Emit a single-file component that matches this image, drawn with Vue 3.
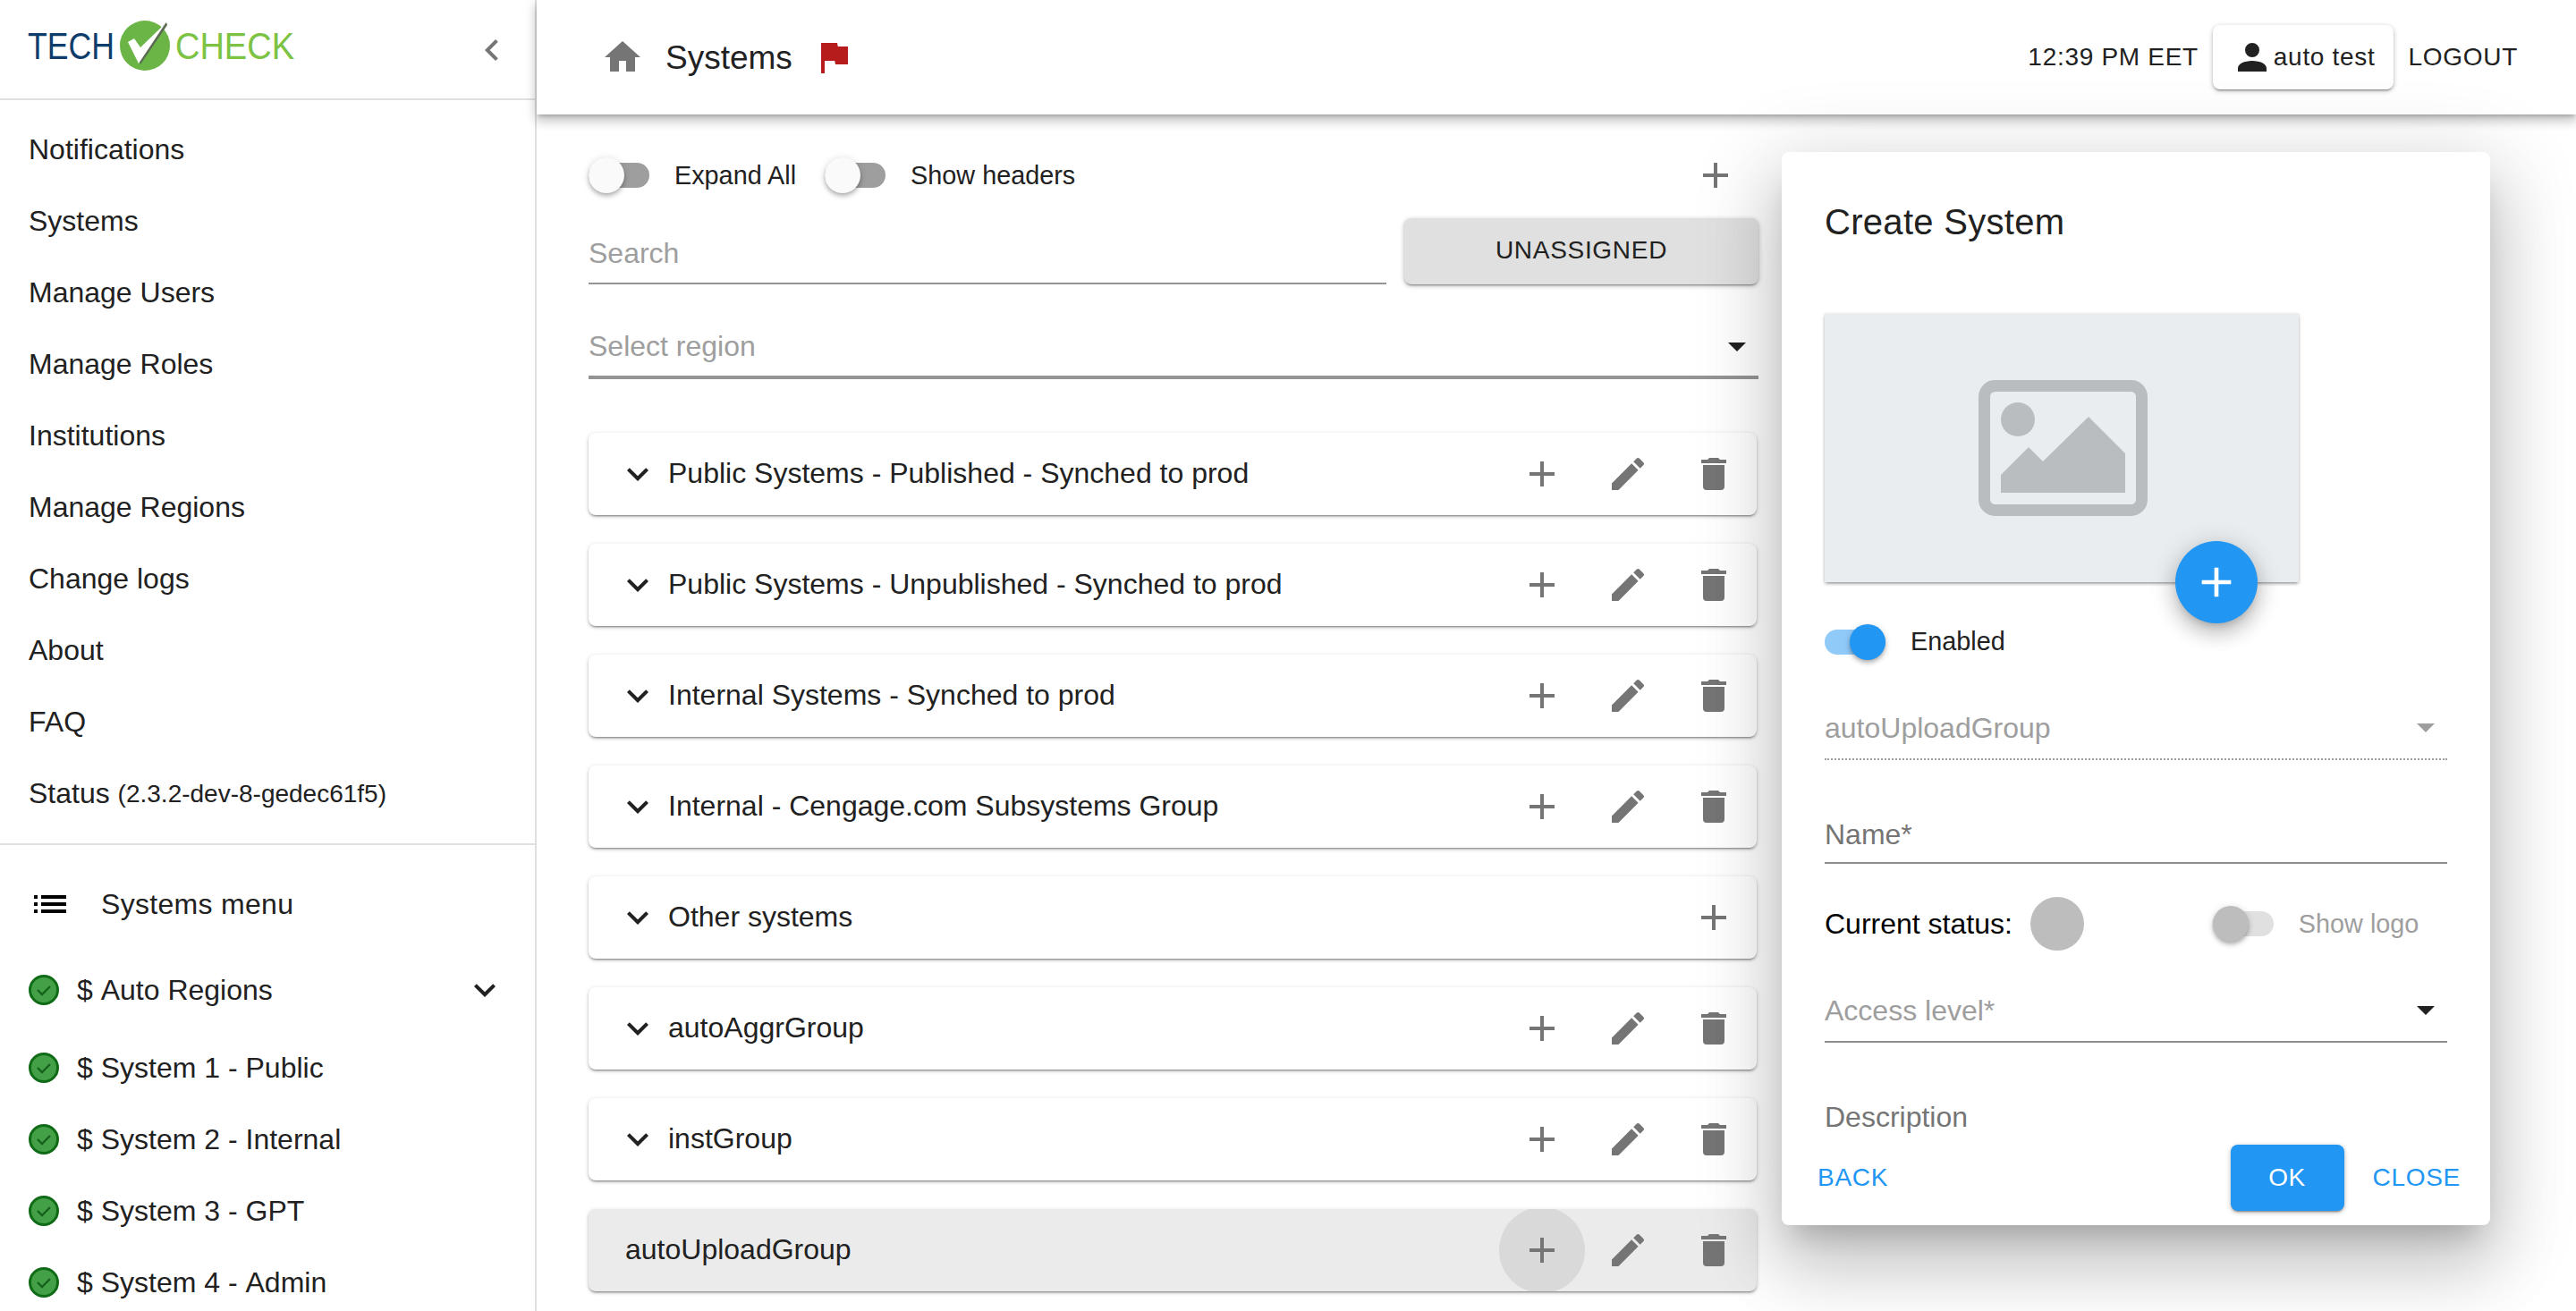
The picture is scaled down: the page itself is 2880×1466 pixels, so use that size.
<template>
  <div class="app">
    <aside class="sidebar">
      <div class="brand">
        <svg class="logo" width="340" height="110" viewBox="0 0 340 110">
          <text transform="translate(31 66) scale(1 1.21)" class="logo-tech">TECH</text>
          <circle cx="162" cy="51" r="28" fill="#6ab546" />
          <polygon points="157,72 187,28 186,25 157,57 150,46 145,50" fill="#5a6b52" />
          <polygon points="155,71 185,26 157,53 150,43 143,47" fill="#fff" />
          <text transform="translate(196 66) scale(1 1.13)" class="logo-check">CHECK</text>
        </svg>
        <svg class="collapse" width="48" height="48" viewBox="0 0 24 24"><path :d="icons.chevronLeft" /></svg>
      </div>

      <nav class="nav">
        <div v-for="item in navItems" :key="item" class="nav-item">{{ item }}</div>
        <div class="nav-item">Status&nbsp;<small>(2.3.2-dev-8-gedec61f5)</small></div>
      </nav>

      <div class="sys-menu">
        <div class="sys-title">
          <svg width="48" height="48" viewBox="0 0 24 24"><path :d="icons.list" /></svg>
          <span>Systems menu</span>
        </div>
        <div v-for="(name, i) in systems" :key="name" class="sys-item" :class="{ 'sys-item--group': i === 0 }">
          <svg class="ok" width="34" height="34" viewBox="0 0 34 34">
            <circle cx="17" cy="17" r="15.5" fill="#43a047" stroke="#0f6b16" stroke-width="3" />
            <path d="M10 17l5 5 9-9" fill="none" stroke="#14621c" stroke-width="2.4" />
          </svg>
          <span>{{ name }}</span>
          <svg v-if="i === 0" class="sys-chevron" width="48" height="48" viewBox="0 0 24 24"><path :d="icons.chevronDown" /></svg>
        </div>
      </div>
    </aside>

    <main class="main">
      <header class="topbar">
        <svg width="48" height="48" viewBox="0 0 24 24" class="grey"><path :d="icons.home" /></svg>
        <span class="page-title">Systems</span>
        <svg width="48" height="48" viewBox="0 0 24 24" class="flag"><path :d="icons.flag" /></svg>
        <div class="top-right">
          <span>12:39 PM EET</span>
          <div class="user-chip">
            <svg width="48" height="48" viewBox="0 0 24 24"><path :d="icons.account" /></svg>
            <span>auto test</span>
          </div>
          <span class="logout">LOGOUT</span>
        </div>
      </header>

      <section class="content">
        <div class="toolbar">
          <span class="switch switch--off"><i></i></span>
          <span class="switch-label">Expand All</span>
          <span class="switch switch--off switch--second"><i></i></span>
          <span class="switch-label">Show headers</span>
          <button class="act act--end"><svg width="48" height="48" viewBox="0 0 24 24"><path :d="icons.plus" /></svg></button>
        </div>

        <div class="search-row">
          <div class="search">Search</div>
          <button class="unassigned">UNASSIGNED</button>
        </div>

        <div class="region">
          <span>Select region</span>
          <svg width="48" height="48" viewBox="0 0 24 24"><path :d="icons.caret" /></svg>
        </div>

        <div class="groups">
          <div v-for="g in groups" :key="g.name" class="group" :class="{ 'group--active': g.active }">
            <svg v-if="!g.active" class="group-chevron" width="48" height="48" viewBox="0 0 24 24"><path :d="icons.chevronDown" /></svg>
            <span class="group-name">{{ g.name }}</span>
            <button class="act" :class="{ 'act--hover': g.active }"><svg width="48" height="48" viewBox="0 0 24 24"><path :d="icons.plus" /></svg></button>
            <template v-if="g.editable">
              <button class="act"><svg width="48" height="48" viewBox="0 0 24 24"><path :d="icons.pencil" /></svg></button>
              <button class="act"><svg width="48" height="48" viewBox="0 0 24 24"><path :d="icons.trash" /></svg></button>
            </template>
          </div>
        </div>
      </section>
    </main>

    <div class="dialog">
      <div class="dialog-body">
        <h2 class="dialog-title">Create System</h2>

        <div class="image-box">
          <svg width="189" height="152" viewBox="0 0 189 152">
            <rect x="6.5" y="6.5" width="176" height="139" rx="12" fill="none" stroke="#b9bdc0" stroke-width="13" />
            <circle cx="44" cy="44" r="19" fill="#b9bdc0" />
            <polygon points="25,106 56,75 72,91 123,41 164,82 164,126 25,126" fill="#b9bdc0" />
          </svg>
          <button class="fab">
            <svg width="56" height="56" viewBox="0 0 24 24"><path :d="icons.plus" /></svg>
          </button>
        </div>

        <div class="enabled-row">
          <span class="switch switch--on"><i></i></span>
          <span class="switch-label enabled-label">Enabled</span>
        </div>

        <div class="field field--disabled">
          <span>autoUploadGroup</span>
          <svg width="48" height="48" viewBox="0 0 24 24"><path :d="icons.caret" /></svg>
        </div>

        <div class="field field--name"><span>Name*</span></div>

        <div class="status-row">
          <span class="status-label">Current status:</span>
          <span class="status-dot"></span>
          <span class="switch switch--disabled"><i></i></span>
          <span class="switch-label switch-label--muted">Show logo</span>
        </div>

        <div class="field field--access">
          <span>Access level*</span>
          <svg width="48" height="48" viewBox="0 0 24 24"><path :d="icons.caret" /></svg>
        </div>

        <div class="description">Description</div>
      </div>

      <div class="dialog-foot">
        <span class="link">BACK</span>
        <button class="ok-btn">OK</button>
        <span class="link link--close">CLOSE</span>
      </div>
    </div>
  </div>
</template>

<script setup>
const icons = {
  chevronLeft: 'M15.41 16.58L10.83 12l4.58-4.59L14 6l-6 6 6 6 1.41-1.42z',
  chevronDown: 'M7.41 8.58L12 13.17l4.59-4.59L18 10l-6 6-6-6 1.41-1.42z',
  list: 'M3 13h2v-2H3v2zm0 4h2v-2H3v2zm0-8h2V7H3v2zm4 4h14v-2H7v2zm0 4h14v-2H7v2zM7 7v2h14V7H7z',
  home: 'M10 20v-6h4v6h5v-8h3L12 3 2 12h3v8h5z',
  flag: 'M14.4 6L14 4H5v17h2v-7h5.6l.4 2h7V6z',
  account: 'M12 4a4 4 0 0 1 4 4 4 4 0 0 1-4 4 4 4 0 0 1-4-4 4 4 0 0 1 4-4m0 10c4.42 0 8 1.79 8 4v2H4v-2c0-2.21 3.58-4 8-4z',
  plus: 'M19 13h-6v6h-2v-6H5v-2h6V5h2v6h6v2z',
  pencil: 'M20.71 7.04c.39-.39.39-1.04 0-1.41l-2.34-2.34c-.37-.39-1.02-.39-1.41 0l-1.84 1.83 3.75 3.75M3 17.25V21h3.75L17.81 9.93l-3.75-3.75L3 17.25z',
  trash: 'M19 4h-3.5l-1-1h-5l-1 1H5v2h14M6 19a2 2 0 0 0 2 2h8a2 2 0 0 0 2-2V7H6v12z',
  caret: 'M7 10l5 5 5-5z',
};

const navItems = [
  'Notifications',
  'Systems',
  'Manage Users',
  'Manage Roles',
  'Institutions',
  'Manage Regions',
  'Change logs',
  'About',
  'FAQ',
];

const systems = [
  '$ Auto Regions',
  '$ System 1 - Public',
  '$ System 2 - Internal',
  '$ System 3 - GPT',
  '$ System 4 - Admin',
];

const groups = [
  { name: 'Public Systems - Published - Synched to prod', editable: true },
  { name: 'Public Systems - Unpublished - Synched to prod', editable: true },
  { name: 'Internal Systems - Synched to prod', editable: true },
  { name: 'Internal - Cengage.com Subsystems Group', editable: true },
  { name: 'Other systems', editable: false },
  { name: 'autoAggrGroup', editable: true },
  { name: 'instGroup', editable: true },
  { name: 'autoUploadGroup', editable: true, active: true },
];
</script>

<style>
html, body { margin: 0; background: #fff; }
</style>

<style scoped>
.app {
  position: relative;
  display: flex;
  width: 2880px;
  height: 1466px;
  overflow: hidden;
  font-family: "Liberation Sans", Arial, sans-serif;
  font-size: 32px;
  color: #212121;
  background: #fff;
}

button {
  border: 0;
  padding: 0;
  background: none;
  font: inherit;
  color: inherit;
}

/* sidebar */
.sidebar {
  flex: 0 0 600px;
  box-sizing: border-box;
  height: 100%;
  border-right: 2px solid #e0e0e0;
  overflow: hidden;
}
.brand {
  display: flex;
  align-items: flex-start;
  justify-content: space-between;
  box-sizing: border-box;
  height: 112px;
  border-bottom: 2px solid #e0e0e0;
}
.logo-tech, .logo-check {
  font-family: "Liberation Sans", Arial, sans-serif;
}
.logo-tech {
  font-size: 35.6px;
  fill: #0f3d6b;
}
.logo-check {
  font-size: 38px;
  fill: #7cc243;
}
.collapse {
  margin: 32px 24px 0 0;
  fill: #757575;
}
.nav {
  padding: 15px 0 16px;
  border-bottom: 2px solid #e0e0e0;
}
.nav-item {
  display: flex;
  align-items: center;
  height: 80px;
  padding-left: 32px;
}
.nav-item small {
  margin-top: 2px;
  font-size: 28px;
}
.sys-menu {
  padding-top: 26px;
}
.sys-title {
  display: flex;
  align-items: center;
  height: 80px;
  padding-left: 32px;
  gap: 33px;
  letter-spacing: 0.3px;
}
.sys-item {
  display: flex;
  align-items: center;
  height: 80px;
  padding-left: 32px;
  gap: 20px;
  font-kerning: none;
}
.sys-item--group {
  height: 94px;
  margin-top: 9px;
}
.ok { flex-shrink: 0; }
.sys-chevron {
  margin-left: auto;
  margin-right: 32px;
  fill: #212121;
}

/* main */
.main {
  flex: 1;
  min-width: 0;
}
.topbar {
  position: relative;
  z-index: 1;
  display: flex;
  align-items: center;
  box-sizing: border-box;
  height: 128px;
  padding: 0 65px 0 72px;
  background: #fff;
  box-shadow: 0 4px 4px -2px rgba(0, 0, 0, 0.2), 0 8px 10px 1px rgba(0, 0, 0, 0.14), 0 2px 14px 2px rgba(0, 0, 0, 0.1);
}
.grey { fill: #757575; }
.page-title {
  margin: 2px 22px 0 24px;
  font-size: 37px;
}
.flag { fill: #b71c1c; }
.top-right {
  display: flex;
  align-items: center;
  margin-left: auto;
  font-size: 28px;
  letter-spacing: 0.7px;
}
.user-chip {
  display: flex;
  align-items: center;
  height: 72px;
  margin: 0 17px 0 16px;
  padding: 0 20px;
  border-radius: 8px;
  background: #fff;
  box-shadow: 0 3px 1px -2px rgba(0, 0, 0, 0.2), 0 2px 2px rgba(0, 0, 0, 0.14), 0 1px 5px rgba(0, 0, 0, 0.12), 0 2px 6px rgba(0, 0, 0, 0.14);
}
.user-chip svg { fill: #212121; }

.content {
  box-sizing: border-box;
  width: 1366px;
  padding: 48px 0 0 58px;
}
.toolbar {
  display: flex;
  align-items: center;
  height: 40px;
  width: 1306px;
}
.act {
  position: relative;
  display: flex;
  align-items: center;
  justify-content: center;
  flex: 0 0 96px;
  width: 96px;
  height: 96px;
  border-radius: 50%;
  fill: #757575;
}
.act--end { margin: 0 -2px 0 auto; }
.act--hover { background: #d9d9d9; }

.switch {
  position: relative;
  flex: 0 0 68px;
  width: 68px;
  height: 28px;
  border-radius: 14px;
}
.switch i {
  position: absolute;
  top: -6px;
  left: 0;
  width: 40px;
  height: 40px;
  border-radius: 50%;
  box-shadow: 0 2px 4px -1px rgba(0, 0, 0, 0.2), 0 4px 5px rgba(0, 0, 0, 0.14), 0 1px 10px rgba(0, 0, 0, 0.12);
}
.switch--off { background: #9e9e9e; }
.switch--off i { background: #fafafa; }
.switch--second { margin-left: 32px; }
.switch--on { background: #90caf9; }
.switch--on i {
  left: 28px;
  background: #2196f3;
}
.switch--disabled { background: #e0e0e0; }
.switch--disabled i { background: #bdbdbd; }
.switch-label {
  margin-left: 28px;
  font-size: 28.8px;
}
.switch-label--muted { color: #9e9e9e; }
.enabled-label { padding-bottom: 2px; }

.search-row {
  display: flex;
  align-items: stretch;
  gap: 20px;
  width: 1308px;
  margin-top: 28px;
}
.search {
  flex: 0 0 892px;
  box-sizing: border-box;
  height: 74px;
  padding-top: 3px;
  line-height: 72px;
  border-bottom: 2px solid #949494;
  color: #9e9e9e;
}
.unassigned {
  flex: 1;
  height: 74px;
  padding-bottom: 2px;
  border-radius: 8px;
  background: #e0e0e0;
  font-size: 28px;
  letter-spacing: 0.7px;
  box-shadow: 0 3px 1px -2px rgba(0, 0, 0, 0.2), 0 2px 2px rgba(0, 0, 0, 0.14), 0 1px 5px rgba(0, 0, 0, 0.12), 0 2px 6px rgba(0, 0, 0, 0.14);
}
.region {
  display: flex;
  align-items: center;
  justify-content: space-between;
  width: 1308px;
  height: 48px;
  margin-top: 45px;
  padding-bottom: 9px;
  border-bottom: 4px solid #949494;
  color: #9e9e9e;
}
.region svg {
  fill: #212121;
}

.groups {
  display: flex;
  flex-direction: column;
  gap: 32px;
  width: 1306px;
  margin-top: 60px;
}
.group {
  display: flex;
  align-items: center;
  flex: 0 0 92px;
  height: 92px;
  overflow: hidden;
  padding-left: 31px;
  border-radius: 8px;
  background: #fff;
  box-shadow: 0 3px 1px -2px rgba(0, 0, 0, 0.2), 0 2px 2px rgba(0, 0, 0, 0.14), 0 1px 5px rgba(0, 0, 0, 0.12), 0 2px 4px rgba(0, 0, 0, 0.1);
}
.group--active {
  padding-left: 41px;
  background: #ebebeb;
}
.group-chevron {
  flex-shrink: 0;
  margin-right: 10px;
  fill: #212121;
}
.group-name {
  flex: 1;
  padding-bottom: 2px;
}

/* dialog */
.dialog {
  position: absolute;
  top: 170px;
  left: 1992px;
  z-index: 2;
  display: flex;
  flex-direction: column;
  width: 792px;
  height: 1200px;
  border-radius: 8px;
  background: #fff;
  box-shadow: 0 22px 30px -14px rgba(0, 0, 0, 0.2), 0 48px 76px 6px rgba(0, 0, 0, 0.14), 0 18px 92px 16px rgba(0, 0, 0, 0.12);
}
.dialog-body {
  flex: 1;
  min-height: 0;
  overflow: hidden;
  padding: 48px 48px 0;
}
.dialog-title {
  margin: 0 0 73px;
  font-size: 40px;
  font-weight: 400;
  line-height: 60px;
  letter-spacing: 0.3px;
}
.image-box {
  position: relative;
  display: flex;
  align-items: center;
  justify-content: center;
  box-sizing: border-box;
  width: 530px;
  height: 300px;
  padding-left: 3px;
  background: #e9edf0;
  box-shadow: 0 3px 3px -2px rgba(0, 0, 0, 0.25), 0 2px 4px rgba(0, 0, 0, 0.2), 0 0 3px rgba(0, 0, 0, 0.12);
}
.fab {
  position: absolute;
  left: 392px;
  top: 254px;
  display: flex;
  align-items: center;
  justify-content: center;
  width: 92px;
  height: 92px;
  border-radius: 50%;
  background: #2196f3;
  fill: #fff;
  box-shadow: 0 6px 10px -4px rgba(0, 0, 0, 0.2), 0 12px 20px 2px rgba(0, 0, 0, 0.14), 0 4px 28px 4px rgba(0, 0, 0, 0.12);
}
.enabled-row {
  display: flex;
  align-items: center;
  height: 40px;
  margin-top: 47px;
}
.field {
  display: flex;
  align-items: center;
  justify-content: space-between;
  height: 48px;
  padding-bottom: 10px;
  color: #9e9e9e;
}
.field svg {
  margin-top: -2px;
  fill: #212121;
}
.field--disabled {
  margin-top: 52px;
  border-bottom: 2px dotted #9e9e9e;
}
.field--disabled svg { fill: #9e9e9e; }
.field--name {
  margin-top: 59px;
  padding-bottom: 7px;
  border-bottom: 2px solid #8f8f8f;
  color: #757575;
}
.status-row {
  display: flex;
  align-items: center;
  height: 60px;
  margin-top: 37px;
}
.status-label { color: #000; }
.status-dot {
  width: 60px;
  height: 60px;
  margin: 0 144px 0 20px;
  border-radius: 50%;
  background: #bdbdbd;
}
.field--access {
  margin-top: 43px;
  border-bottom: 2px solid #8f8f8f;
}
.description {
  margin-top: 59px;
  line-height: 48px;
  color: #757575;
}
.dialog-foot {
  display: flex;
  align-items: center;
  flex: 0 0 90px;
  box-sizing: border-box;
  height: 90px;
  padding: 0 33px 16px 40px;
}
.link {
  font-size: 28px;
  letter-spacing: 0.7px;
  color: #2196f3;
}
.ok-btn {
  width: 127px;
  height: 74px;
  margin-left: auto;
  border-radius: 8px;
  background: #2196f3;
  color: #fff;
  font-size: 28px;
  letter-spacing: 0.7px;
  box-shadow: 0 3px 1px -2px rgba(0, 0, 0, 0.2), 0 2px 2px rgba(0, 0, 0, 0.14), 0 1px 5px rgba(0, 0, 0, 0.12), 0 2px 6px rgba(0, 0, 0, 0.14);
}
.link--close { margin-left: 32px; }
</style>
